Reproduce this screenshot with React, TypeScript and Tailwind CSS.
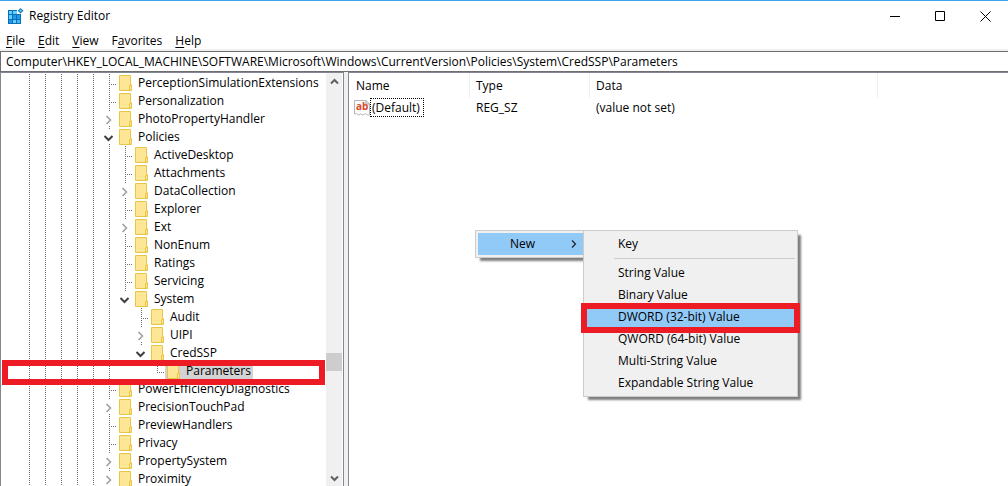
// src/App.tsx
import React from 'react';

type NodeState = 'leaf' | 'closed' | 'open';

interface TreeRow {
  name: string;
  depth: number;
  state: NodeState;
  last?: boolean;
  selected?: boolean;
}

const treeRows: TreeRow[] = [
  { name: 'PerceptionSimulationExtensions', depth: 5, state: 'leaf' },
  { name: 'Personalization', depth: 5, state: 'leaf' },
  { name: 'PhotoPropertyHandler', depth: 5, state: 'closed' },
  { name: 'Policies', depth: 5, state: 'open' },
  { name: 'ActiveDesktop', depth: 6, state: 'leaf' },
  { name: 'Attachments', depth: 6, state: 'leaf' },
  { name: 'DataCollection', depth: 6, state: 'closed' },
  { name: 'Explorer', depth: 6, state: 'leaf' },
  { name: 'Ext', depth: 6, state: 'closed' },
  { name: 'NonEnum', depth: 6, state: 'leaf' },
  { name: 'Ratings', depth: 6, state: 'leaf' },
  { name: 'Servicing', depth: 6, state: 'leaf' },
  { name: 'System', depth: 6, state: 'open', last: true },
  { name: 'Audit', depth: 7, state: 'leaf' },
  { name: 'UIPI', depth: 7, state: 'closed' },
  { name: 'CredSSP', depth: 7, state: 'open', last: true },
  { name: 'Parameters', depth: 8, state: 'leaf', last: true, selected: true },
  { name: 'PowerEfficiencyDiagnostics', depth: 5, state: 'leaf' },
  { name: 'PrecisionTouchPad', depth: 5, state: 'closed' },
  { name: 'PreviewHandlers', depth: 5, state: 'leaf' },
  { name: 'Privacy', depth: 5, state: 'leaf' },
  { name: 'PropertySystem', depth: 5, state: 'closed' },
  { name: 'Proximity', depth: 5, state: 'closed' },
];

// [before, underlined letter, after]
const menus = [
  ['', 'F', 'ile'],
  ['', 'E', 'dit'],
  ['', 'V', 'iew'],
  ['F', 'a', 'vorites'],
  ['', 'H', 'elp'],
];

const valueTypes = [
  'String Value',
  'Binary Value',
  'DWORD (32-bit) Value',
  'QWORD (64-bit) Value',
  'Multi-String Value',
  'Expandable String Value',
];

const RegeditIcon = () => (
  <svg width="16" height="16" viewBox="0 0 16 16" aria-hidden="true">
    <path d="M0 2h10v3h3v11H0z" fill="#0a6ebd" />
    <path d="M1 3h3v3H1zM5 3h4v3H5zM1 7h3v4H1zM5 12h3v3H5z" fill="#5fd0fa" />
    <path d="M5 7h3v4H5zM1 12h3v3H1zM9 7h3v4H9z" fill="#1e9ae6" />
    <path d="M9 12h3v3H9z" fill="#45bdf2" />
    <path d="M9 2h1v3h3v1H9z" fill="#fff" />
    <path d="M12.5 0L15.5 2.7 12.5 5.4 9.7 2.7z" fill="#1477bd" />
    <path d="M12.5 1.3L14 2.7 12.5 4 11.2 2.7z" fill="#5fd0fa" />
  </svg>
);

const FolderIcon = () => (
  <svg width="13" height="16" viewBox="0 0 13 16" className="shrink-0" aria-hidden="true">
    <path d="M.5.5h11v9h1v6H.5z" fill="#ffe694" stroke="#e9c64b" />
    <path d="M10.5 15V10.5h2V15z" fill="#ffe694" stroke="#e9c64b" />
  </svg>
);

const StringValueIcon = () => (
  <svg width="16" height="16" viewBox="0 0 16 16" className="shrink-0" aria-hidden="true">
    <path d="M.5.5h11.5l3.5 3.5v11h-2l-2-1.5-2.5 1.5-2.5-1-2 1-2-1.5-2 .5z" fill="#fdfdfd" stroke="#b5b5b5" />
    <path d="M12 .5v3.5h3.5" fill="none" stroke="#a5a5a5" />
    <text x="2" y="10" fontSize="10" fontWeight="700" fill="#d9482b" fontFamily="Open Sans, sans-serif">
      ab
    </text>
  </svg>
);

const Guide: React.FC<{ state?: NodeState; last?: boolean }> = ({ state, last }) => (
  <svg
    width="16"
    height="18"
    viewBox="0 0 16 18"
    className="shrink-0"
    fill="none"
    stroke="#6f6f6f"
    strokeDasharray="1 1"
    aria-hidden="true"
  >
    {!state && <path d="M8.5 0v18" />}
    {state === 'leaf' && <path d={last ? 'M8.5 0v11M8 10.5h8' : 'M8.5 0v18M8 10.5h8'} />}
    {(state === 'closed' || state === 'open') && <path d={last ? 'M8.5 0v2' : 'M8.5 0v2M8.5 16v2'} />}
    {state === 'closed' && (
      <path d="M5.5 6l4 4-4 4" stroke="#a0a0a0" strokeWidth="1.6" strokeDasharray="none" />
    )}
    {state === 'open' && (
      <path d="M3.500 8l4 4 4-4" stroke="#404040" strokeWidth="2" strokeDasharray="none" />
    )}
  </svg>
);

const TreeItem: React.FC<{ row: TreeRow }> = ({ row }) => (
  <li role="treeitem" aria-selected={!!row.selected} className="relative flex h-[18px] items-center">
    {Array.from({ length: row.depth }, (_, i) =>
      // System and CredSSP close their level, so nothing runs past them
      i < 6 ? <Guide key={i} /> : <span key={i} className="w-4 shrink-0" />,
    )}
    <Guide state={row.state} last={row.last} />
    <span className={row.selected ? 'flex h-[18px] items-center bg-[#d3d3d3] pl-0.5' : 'flex h-[18px] items-center pl-0.5'}>
      <FolderIcon />
      <span className="pr-0.5 pl-1.5 whitespace-nowrap">{row.name}</span>
    </span>
    {row.selected && (
      <span className="absolute -top-0.5 right-px left-[-19px] z-10 h-[25px] border-6 border-[#ed1c24]" />
    )}
  </li>
);

const MenuItem: React.FC<{ label: string; marked?: boolean }> = ({ label, marked }) => (
  <button
    type="button"
    role="menuitem"
    className={
      marked
        ? 'relative flex h-[22px] w-full items-center bg-[#91c9f7] pl-8 text-left'
        : 'flex h-[22px] w-full items-center pl-8 text-left'
    }
  >
    {label}
    {marked && (
      <span className="absolute -inset-x-[5px] -top-[3px] -bottom-[5px] z-10 border-6 border-[#ed1c24]" />
    )}
  </button>
);

const App: React.FC = () => {
  return (
    <div className="flex h-screen flex-col overflow-hidden border-t border-[#3aa5ea] bg-white font-['Open_Sans','Noto_Sans',sans-serif] text-xs text-black">
      {/* Title bar */}
      <header className="flex h-[30px] shrink-0 items-center">
        <div className="flex flex-1 items-center gap-[5px] pl-2">
          <RegeditIcon />
          <h1>Registry Editor</h1>
        </div>
        <button type="button" aria-label="Minimize" className="flex h-full w-[45px] items-center justify-center">
          <svg width="11" height="11" viewBox="0 0 11 11"><path d="M0 5.5h10" stroke="#000" /></svg>
        </button>
        <button type="button" aria-label="Maximize" className="flex h-full w-[45px] items-center justify-center">
          <svg width="11" height="11" viewBox="0 0 11 11"><path d="M.5.5h9v9h-9z" fill="none" stroke="#000" /></svg>
        </button>
        <button type="button" aria-label="Close" className="flex h-full w-[45px] items-center justify-center">
          <svg width="11" height="11" viewBox="0 0 11 11"><path d="M.5.5l10 10M10.5.5l-10 10" stroke="#000" /></svg>
        </button>
      </header>

      {/* Menu bar */}
      <nav className="flex h-[18px] shrink-0 items-end gap-[13px] pl-1.5">
        {menus.map(([before, key, after]) => (
          <button key={key} type="button">
            {before}
            <span className="underline underline-offset-2">{key}</span>
            {after}
          </button>
        ))}
      </nav>

      {/* Address bar */}
      <div className="shrink-0 bg-[#f0f0f0] pt-0.5">
        <input
          aria-label="Address"
          defaultValue="Computer\HKEY_LOCAL_MACHINE\SOFTWARE\Microsoft\Windows\CurrentVersion\Policies\System\CredSSP\Parameters"
          className="block h-[21px] w-full border border-r-0 border-[#6f6f73] bg-white pl-[5px] outline-none"
        />
      </div>

      <main className="flex min-h-0 flex-1 bg-[#f0f0f0]">
        {/* Key tree */}
        <aside className="flex w-[344px] shrink-0 border-x border-t border-[#828790] bg-white">
          <ul role="tree" className="min-w-0 flex-1 overflow-hidden pt-px pl-5">
            {treeRows.map((row) => (
              <TreeItem key={row.name} row={row} />
            ))}
          </ul>
          <div className="mr-px flex w-4 flex-col bg-[#f0f0f0]">
            <button type="button" aria-label="Scroll up" className="flex h-[17px] items-center justify-center">
              <svg width="9" height="7" viewBox="0 0 9 7"><path d="M1 5.5L4.5 2 8 5.5" fill="none" stroke="#606060" strokeWidth="2" /></svg>
            </button>
            <div className="grow-[263]" />
            <div className="h-[18px] bg-[#cdcdcd]" />
            <div className="grow-[100]" />
            <button type="button" aria-label="Scroll down" className="flex h-[15px] items-center justify-center">
              <svg width="9" height="7" viewBox="0 0 9 7"><path d="M1 1.5L4.5 5 8 1.5" fill="none" stroke="#606060" strokeWidth="2" /></svg>
            </button>
          </div>
        </aside>

        {/* Values */}
        <section className="relative ml-1 min-w-0 flex-1 border-t border-l border-[#828790] bg-white">
          <table className="w-full table-fixed border-separate border-spacing-0 text-left">
            <colgroup>
              <col className="w-[121px]" />
              <col className="w-[120px]" />
              <col className="w-[288px]" />
              <col />
            </colgroup>
            <thead>
              <tr className="h-[25px]">
                <th className="border-r border-[#efefef] p-0 pl-[7px] font-normal">Name</th>
                <th className="border-r border-[#efefef] p-0 pl-1.5 font-normal">Type</th>
                <th className="border-r border-[#efefef] p-0 pl-1.5 font-normal">Data</th>
                <th className="p-0" />
              </tr>
            </thead>
            <tbody>
              <tr className="h-[19px]">
                <td className="p-0 pl-[5px]">
                  <div className="flex items-center">
                    <StringValueIcon />
                    <span className="flex h-[19px] items-center border border-dotted border-black pr-[3px] pl-px">(Default)</span>
                  </div>
                </td>
                <td className="p-0 pl-1.5">REG_SZ</td>
                <td className="p-0 pl-1.5">(value not set)</td>
                <td className="p-0" />
              </tr>
            </tbody>
          </table>

          {/* Context menu */}
          <div className="absolute top-[157px] left-[126px] flex items-start">
            <div
              role="menu"
              className="w-[108px] border border-r-0 border-[#cccccc] bg-[#f0f0f0] py-0.5 pl-0.5 shadow-[4px_4px_2px_-1px_rgba(0,0,0,0.5)]"
            >
              <button
                type="button"
                role="menuitem"
                className="flex h-[22px] w-full items-center justify-between bg-[#91c9f7] pr-1.5 pl-8"
              >
                New
                <svg width="6" height="8" viewBox="0 0 6 8"><path d="M1 .5L4.5 4 1 7.5" fill="none" stroke="#222" strokeWidth="1.2" /></svg>
              </button>
            </div>
            <div
              role="menu"
              className="relative w-[215px] border border-[#cccccc] bg-[#f0f0f0] p-0.5 shadow-[4px_4px_2px_-1px_rgba(0,0,0,0.5)]"
            >
              <MenuItem label="Key" />
              <hr className="my-[3px] ml-7 border-[#cccccc]" />
              {valueTypes.map((label) => (
                <MenuItem key={label} label={label} marked={label.startsWith('DWORD')} />
              ))}
            </div>
          </div>
        </section>
      </main>
    </div>
  );
};

export default App;
